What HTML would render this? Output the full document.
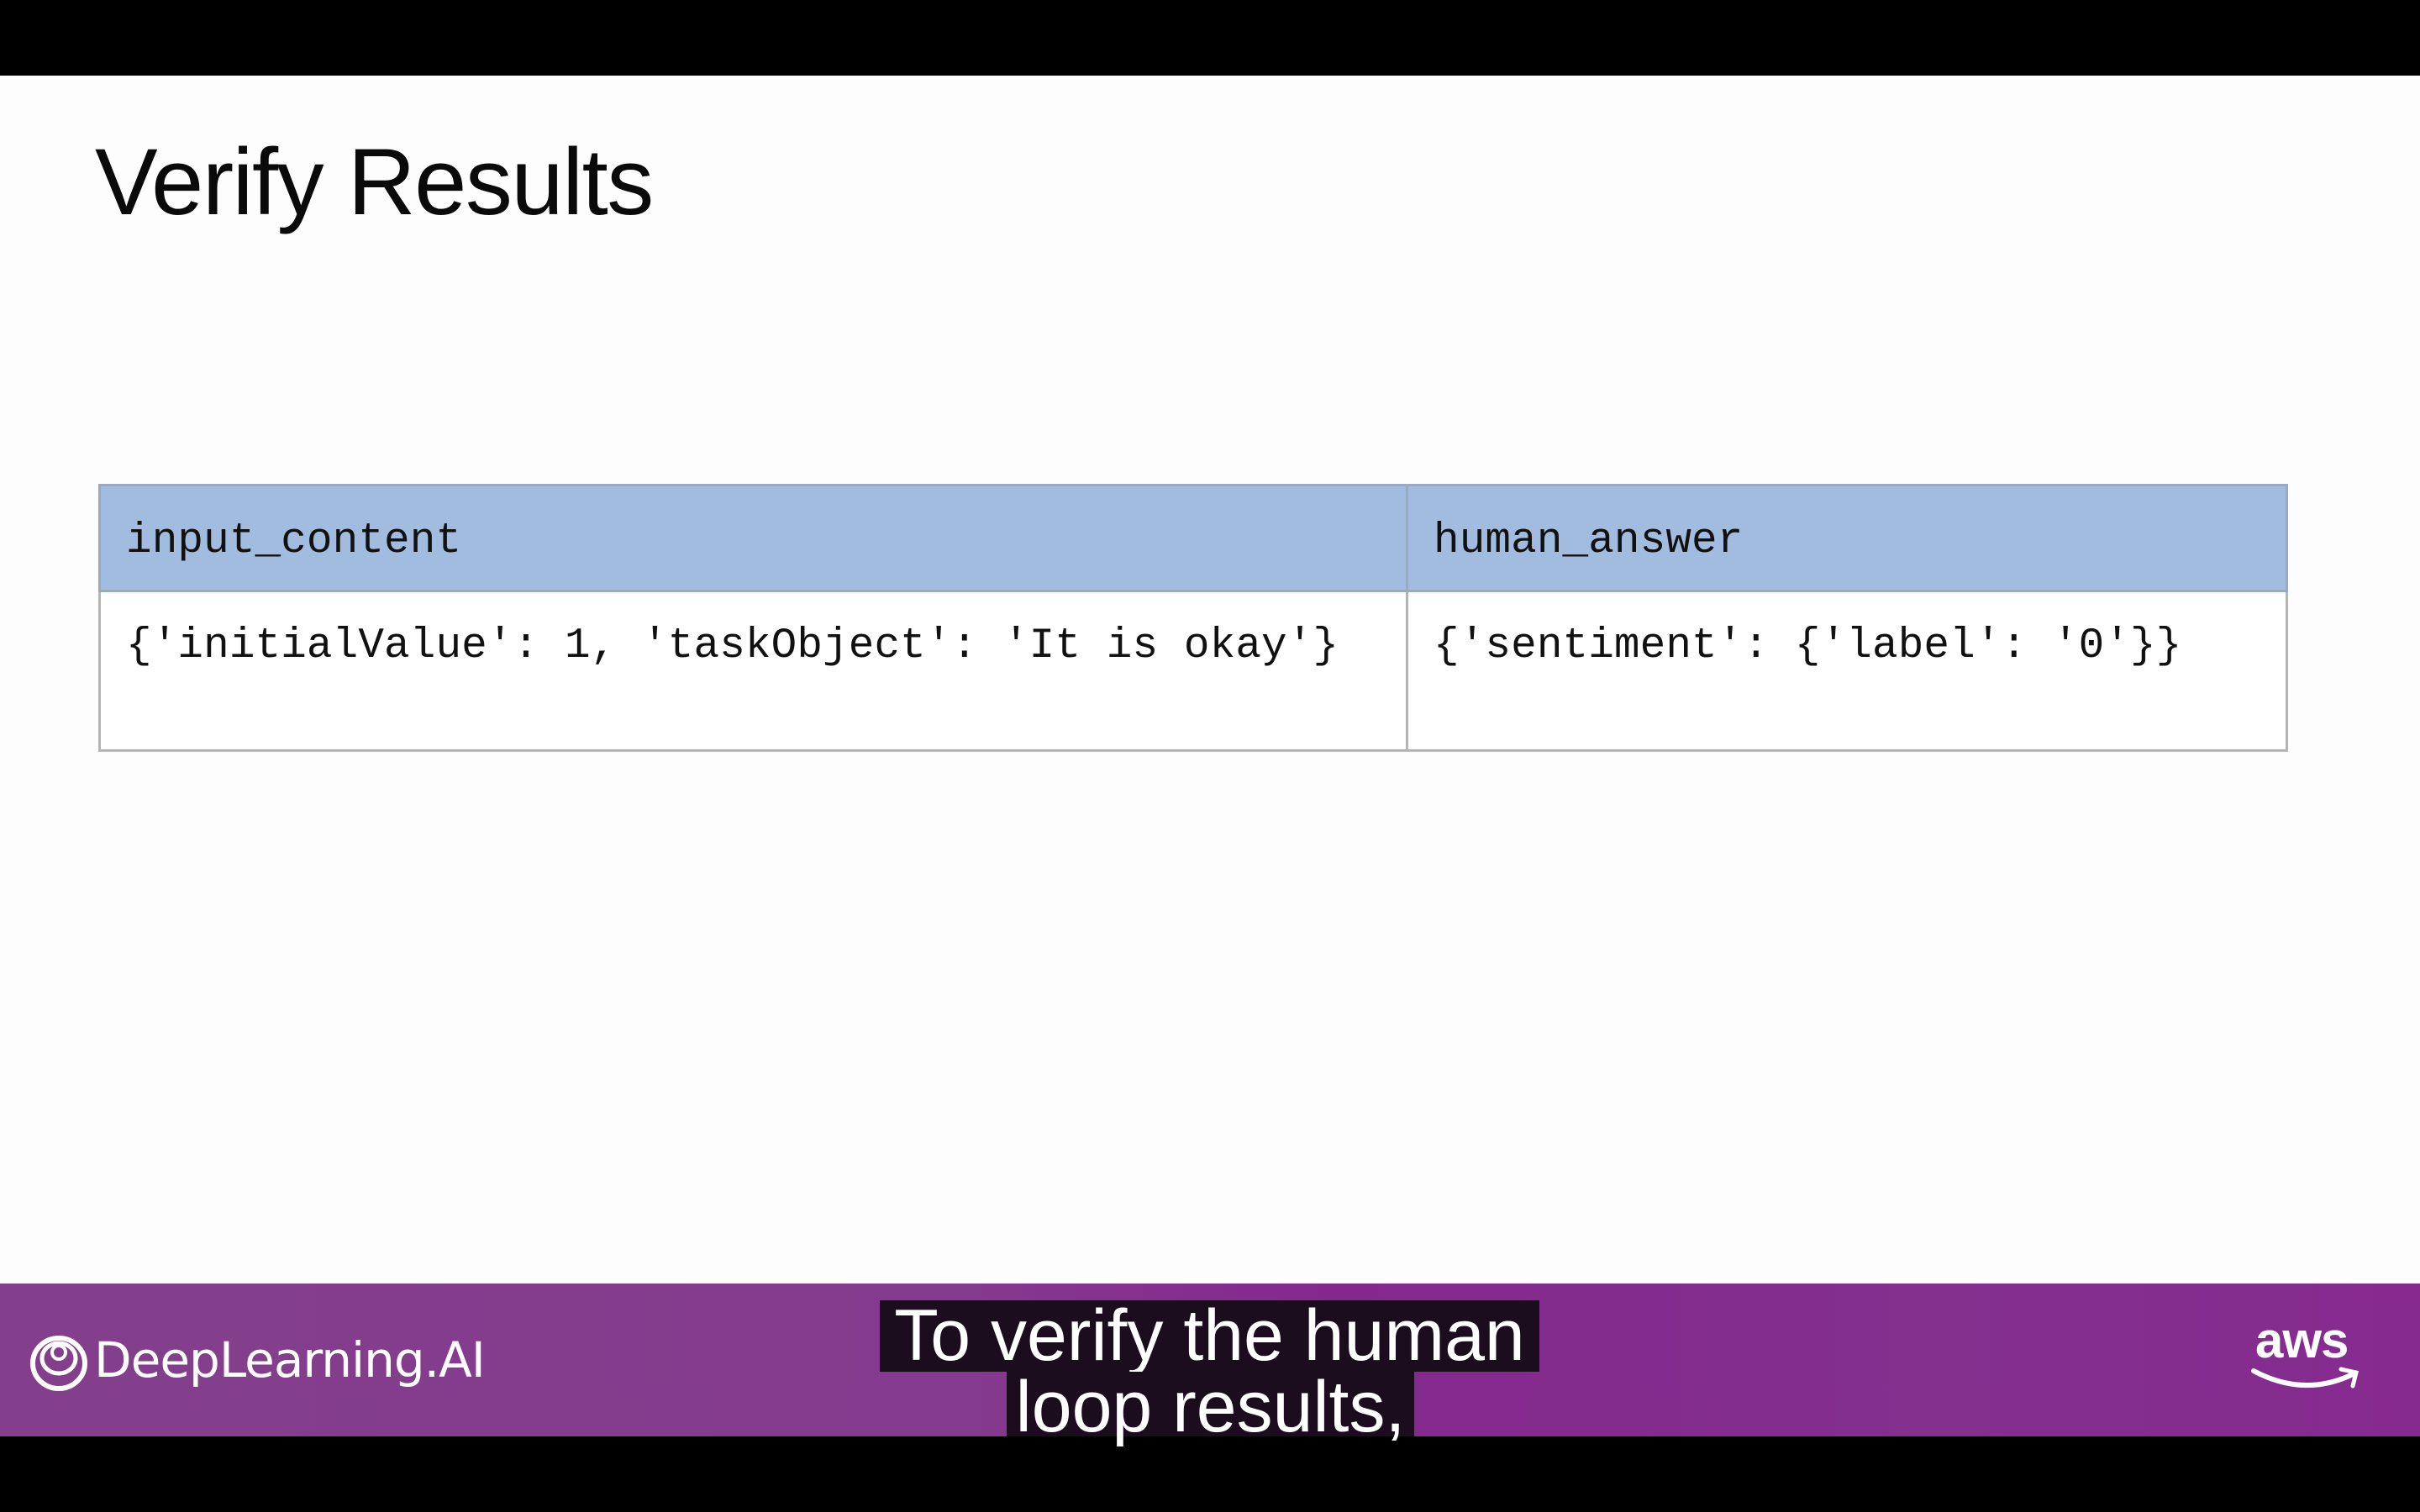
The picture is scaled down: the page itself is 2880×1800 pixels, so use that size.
<!DOCTYPE html>
<html><head><meta charset="utf-8"><style>
*{margin:0;padding:0;box-sizing:border-box}
html,body{width:2880px;height:1800px;overflow:hidden;background:#000}
.slide{position:absolute;left:0;top:90px;width:2880px;height:1438px;background:#fdfdfd}
.title{position:absolute;left:113px;top:71px;font:112px/1 "Liberation Sans",sans-serif;color:#0a0a0a;letter-spacing:-1.5px;white-space:nowrap}
table{position:absolute;left:117px;top:576px;width:2606px;height:319px;border-collapse:collapse;font:51px "Liberation Mono",monospace;letter-spacing:0.1px;color:#111}
td{border:3px solid #b4b4b4;padding:0 0 0 30px;white-space:nowrap}
tr.h td{background:#a2bce0;height:126px;border-color:#9aaac0;vertical-align:middle;padding-top:8px}
tr.b td{vertical-align:top;padding-top:36px;background:#fff}
.foot{position:absolute;left:0;top:1528px;width:2880px;height:182px;background:linear-gradient(90deg,#833f8c 0%,#843a8e 40%,#84288e 55%,#83308f 80%,#862a8f 100%)}
.logo{position:absolute;left:36px;top:1590px;width:68px;height:66px}
.dl{position:absolute;left:112px;top:1590px;font:58px/1 "DejaVu Sans","Liberation Sans",sans-serif;color:#fff;letter-spacing:-1px;white-space:nowrap}
.aws{position:absolute;left:2684px;top:1566px;font:bold 60px/1 "Liberation Sans",sans-serif;color:#fff;letter-spacing:-1px}
.sub{position:absolute;background:#1b0c1e;color:#fff;font:86px/85px "Liberation Sans",sans-serif;white-space:nowrap;text-align:center}
</style></head><body>
<div class="slide">
<div class="title">Verify Results</div>
</div>
<table>
<tr class="h"><td style="width:1556px">input_content</td><td>human_answer</td></tr>
<tr class="b"><td>{'initialValue': 1, 'taskObject': 'It is okay'}</td><td>{'sentiment': {'label': '0'}}</td></tr>
</table>
<div class="foot"></div>
<svg class="logo" viewBox="0 0 68 66"><ellipse cx="34" cy="33" rx="31" ry="30" fill="none" stroke="#fff" stroke-width="6"/><ellipse cx="34" cy="27" rx="20" ry="18" fill="none" stroke="#fff" stroke-width="5"/><circle cx="34" cy="20" r="8" fill="none" stroke="#fff" stroke-width="4"/></svg>
<div class="dl">DeepLearning.AI</div>
<div class="aws">aws</div>
<svg style="position:absolute;left:2678px;top:1624px" width="134" height="36" viewBox="0 0 134 36"><path d="M4 8 Q64 40 122 12" fill="none" stroke="#fff" stroke-width="6" stroke-linecap="round"/><path d="M108 6 L126 10 L122 26" fill="none" stroke="#fff" stroke-width="5" stroke-linecap="round"/></svg>
<div class="sub" style="left:1047px;top:1548px;width:785px;height:85px">To verify the human</div>
<div class="sub" style="left:1198px;top:1633px;width:485px;height:77px;overflow:visible">loop results,</div>
</body></html>
